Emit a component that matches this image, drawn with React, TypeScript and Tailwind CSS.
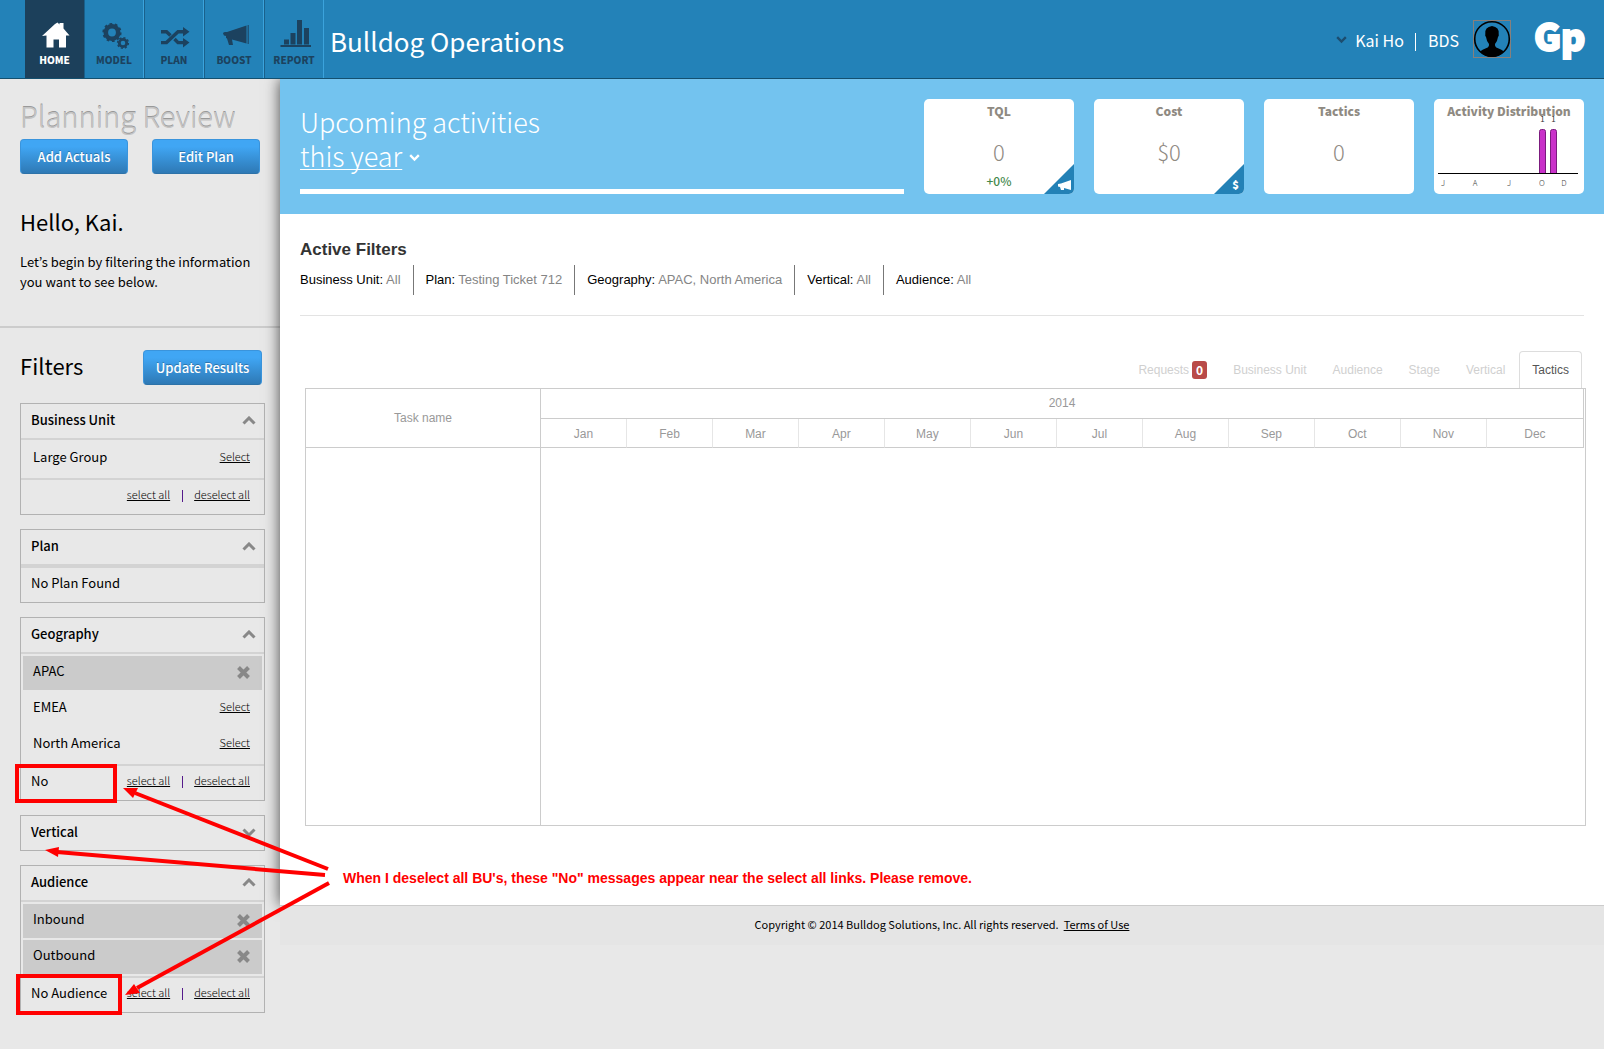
import type { ReactNode } from "react";

const navItems: { label: string; active?: boolean; icon: ReactNode }[] = [
  {
    label: "HOME",
    active: true,
    icon: (
      <path d="M16 36 L29 24 L31.5 22.5 L33.5 24.5 V23 H37.5 V28.5 L43.5 35.5 H40 V47.5 H33 V39.5 H27.5 V47.5 H20.5 V35.5 Z" />
    ),
  },
  {
    label: "MODEL",
    icon: (
      <g fill="none" stroke="currentColor">
        <circle cx="27" cy="32.5" r="6.2" strokeWidth="4.6" />
        <circle cx="27" cy="32.5" r="8.6" strokeWidth="2" strokeDasharray="2.7 2.7" />
        <circle cx="38" cy="43" r="3.7" strokeWidth="2.8" />
        <circle cx="38" cy="43" r="5.4" strokeWidth="1.4" strokeDasharray="2.1 2.1" />
      </g>
    ),
  },
  {
    label: "PLAN",
    icon: (
      <>
        <g fill="none" stroke="currentColor" strokeWidth="3.4">
          <path d="M16 31.8 H21.5 L25.5 35.6" />
          <path d="M16 42.6 H21.5 L33 31.8 H39" />
          <path d="M29.5 39 L33 42.6 H39" />
        </g>
        <path d="M38 27 L44.5 31.8 L38 36.5 Z M38 38 L44.5 42.6 L38 47.4 Z" />
      </>
    ),
  },
  {
    label: "BOOST",
    icon: (
      <>
        <path d="M18 33.5 Q18 32 20 32 L22 32 L41.5 25.5 V43.5 L27 39.5 L28 45 H24 L22 38.5 L21 38 V36 L19 35.5 Z" />
        <path d="M42.5 25 H44 V44 H42.5 Z" opacity="0.7" />
      </>
    ),
  },
  {
    label: "REPORT",
    icon: (
      <path d="M15.5 45 H46 V47 H15.5 Z M19 39.5 H24 V44.5 H19 Z M25.5 33 H30.5 V44.5 H25.5 Z M32 20 H37 V44.5 H32 Z M39 28 H44 V44.5 H39 Z" />
    ),
  },
];

function Chevron({ up = false, className }: { up?: boolean; className: string }) {
  return (
    <svg viewBox="0 0 14 9" className={className} fill="none" stroke="currentColor" strokeWidth="3" aria-hidden="true">
      <path d={up ? "M1.5 7.5 L7 2 L12.5 7.5" : "M1.5 1.5 L7 7 L12.5 1.5"} />
    </svg>
  );
}

function BlueButton({ children, className }: { children: ReactNode; className: string }) {
  return (
    <button
      type="button"
      className={`h-[35px] rounded border border-[#3a94dc] border-b-[#2d72a8] bg-linear-to-b from-[#40a6f4] from-20% to-[#2e79b5] text-[13px] leading-[33px] font-medium text-white [text-shadow:0_-1px_0_rgba(0,0,0,0.25)] ${className}`}
    >
      {children}
    </button>
  );
}

type Item = { name: string; selected?: boolean };

function FilterPanel({
  title,
  items,
  emptyText,
  footerText,
  collapsed = false,
}: {
  title: string;
  items?: Item[];
  emptyText?: string;
  footerText?: string;
  collapsed?: boolean;
}) {
  return (
    <section className="border border-[#b2b2b2] text-[13px]">
      <button type="button" className="flex h-[34px] w-full items-center justify-between pr-2 pb-[2px] pl-[10px] font-medium">
        <span className="leading-8">{title}</span>
        <Chevron up={!collapsed} className="w-[14px] text-[#888]" />
      </button>
      {emptyText && <p className="h-[38px] border-t-4 border-[#d3d3d3] px-[10px] leading-[30px]">{emptyText}</p>}
      {items && (
        <>
          <ul className="flex flex-col gap-[2px] border-y-2 border-[#d3d3d3] p-[2px]">
            {items.map((item) => (
              <li
                key={item.name}
                className={`flex h-[34px] items-start justify-between pr-3 pl-[10px] leading-[30px] ${item.selected ? "bg-[#cbcbcb]" : ""}`}
              >
                <span>{item.name}</span>
                {item.selected ? (
                  <button type="button" aria-label={`Remove ${item.name}`} className="flex h-8 items-center text-[#888]">
                    <svg viewBox="0 0 13 13" className="w-[13px]" stroke="currentColor" strokeWidth="4" aria-hidden="true">
                      <path d="M1.5 1.5 L11.5 11.5 M11.5 1.5 L1.5 11.5" />
                    </svg>
                  </button>
                ) : (
                  <a href="#" className="text-[11px] leading-7 font-light underline">
                    Select
                  </a>
                )}
              </li>
            ))}
          </ul>
          <div className="flex h-[34px] items-start pr-[14px] pl-[10px] leading-[30px]">
            <span className="flex-1">{footerText}</span>
            <a href="#" className="text-[11px] leading-7 font-light underline">
              select all
            </a>
            <span className="mt-[10px] mr-[11px] ml-3 h-3 w-px bg-[#551a8b]" />
            <a href="#" className="text-[11px] leading-7 font-light underline">
              deselect all
            </a>
          </div>
        </>
      )}
    </section>
  );
}

function StatCard({ title, value, change, corner }: { title: string; value: string; change?: string; corner?: ReactNode }) {
  return (
    <section className="relative h-[95px] w-[150px] overflow-hidden rounded-[5px] bg-white text-center text-[#8f8a82]">
      <h3 className="text-[12px] leading-6 font-black">{title}</h3>
      <p className="mt-2 text-[22px] leading-10 font-light">{value}</p>
      {change && <p className="text-[12px] leading-5 font-medium text-[#44884c]">{change}</p>}
      {corner && (
        <svg viewBox="0 0 30 30" className="absolute right-0 bottom-0 w-[30px]" aria-hidden="true">
          <path d="M0 30 L30 0 V30 Z" fill="#2381b6" />
          {corner}
        </svg>
      )}
    </section>
  );
}

const axis = [
  { x: 9, t: "J" },
  { x: 41, t: "A" },
  { x: 75, t: "J" },
  { x: 108, t: "O" },
  { x: 130, t: "D" },
];

function DistributionCard() {
  return (
    <section className="relative h-[95px] w-[150px] rounded-[5px] bg-white text-center text-[#8f8a82]">
      <h3 className="text-[12px] leading-6 font-black">Activity Distribution</h3>
      <svg viewBox="0 0 150 95" className="absolute inset-0" role="img" aria-label="Activities per month">
        <path d="M4 74.5 H144" stroke="#000" />
        {[105.5, 116.5].map((x) => (
          <g key={x}>
            <path
              d={`M${x} 74 V32.5 Q${x} 30.5 ${x + 2} 30.5 H${x + 4} Q${x + 6} 30.5 ${x + 6} 32.5 V74`}
              fill="#c931c9"
              stroke="#7b1b7e"
            />
            <text x={x + 3} y="23" fontSize="8" fill="#333" textAnchor="middle">
              1
            </text>
          </g>
        ))}
        {axis.map((a) => (
          <text key={a.x} x={a.x} y="87" fontSize="8" fill="#444" fontWeight="300" textAnchor="middle">
            {a.t}
          </text>
        ))}
      </svg>
    </section>
  );
}

const activeFilters = [
  ["Business Unit:", "All"],
  ["Plan:", "Testing Ticket 712"],
  ["Geography:", "APAC, North America"],
  ["Vertical:", "All"],
  ["Audience:", "All"],
];

const tabs = ["Business Unit", "Audience", "Stage", "Vertical"];
const months = ["Jan", "Feb", "Mar", "Apr", "May", "Jun", "Jul", "Aug", "Sep", "Oct", "Nov", "Dec"];

const arrows = [
  { tail: "328 869", neck: "135 793", head: "123,788 138,788 133,798" },
  { tail: "325 875", neck: "57 852", head: "45,850 59,847 58,857" },
  { tail: "329 883", neck: "137 988", head: "125,995 134,984 140,993" },
];

export default function App() {
  return (
    <div className='relative min-h-screen bg-[#e8e8e8] font-["Noto_Sans_CJK_KR",sans-serif] text-black'>
      <header className="relative z-10 flex h-[79px] items-stretch border-b border-[#14506f] bg-[#2382b8] pl-[25px]">
        <nav className="flex">
          {navItems.map((n) => (
            <a
              key={n.label}
              href="#"
              className={`flex flex-col items-center border-r border-l ${
                n.active ? "w-[59px] border-[#1c405b] bg-[#1c405b] text-white" : "w-[60px] border-r-[#3ba3dc] border-l-[#1a608b] text-[#1c425f]"
              }`}
            >
              <svg viewBox="0 0 58 50" className="h-[50px] w-[58px]" fill="currentColor" aria-hidden="true">
                {n.icon}
              </svg>
              <span className="text-[10px] leading-[19px] font-black">{n.label}</span>
            </a>
          ))}
        </nav>
        <h1 className="ml-[6px] text-[26px] leading-[82px] text-white">Bulldog Operations</h1>
        <div className="ml-auto flex items-center pr-5 text-[16px] text-white">
          <button type="button" className="flex items-center gap-2 pt-[2px] leading-6">
            <Chevron className="w-[11px] text-[#1c4d6f]" />
            Kai Ho
          </button>
          <span className="mt-[5px] mr-3 ml-[11px] h-[18px] w-px bg-white" />
          <span className="pt-[2px] leading-6">BDS</span>
          <svg viewBox="0 0 38 38" className="ml-[14px] w-[38px]" aria-hidden="true">
            <rect x="0.5" y="0.5" width="37" height="37" fill="none" stroke="#87807c" />
            <circle cx="19" cy="19" r="17.3" fill="none" stroke="#000" strokeWidth="1.6" />
            <path d="M7 31.5 Q9 29.5 13.5 28 Q16.3 27 16 24 Q13.5 21 13 17 Q11.8 16 12.3 14 Q11.5 7 19 6 Q26.5 7 25.7 14 Q26.2 16 25 17 Q24.5 21 22 24 Q21.7 27 24.5 28 Q29 29.5 31 31.5 Q26 37 19 37 Q12 37 7 31.5 Z" />
          </svg>
          <span className="ml-[23px] w-[50px] pb-2 text-[37px] leading-10 font-black [-webkit-text-stroke:2px_white]">Gp</span>
        </div>
      </header>

      <div className="flex items-start">
        <aside className="w-[280px] shrink-0 pb-9">
          <div className="border-b-2 border-[#ccc] px-5 pt-4 pb-[34px]">
            <h2 className="text-[29px] leading-10 font-light text-[#c4c4c4] [text-shadow:0_-1px_0_#999]">Planning Review</h2>
            <div className="mt-1 flex gap-6">
              <BlueButton className="w-[108px]">Add Actuals</BlueButton>
              <BlueButton className="w-[108px]">Edit Plan</BlueButton>
            </div>
            <h2 className="mt-[31px] text-[22px] leading-8">Hello, Kai.</h2>
            <p className="mt-[15px] text-[13px] leading-5">Let’s begin by filtering the information you want to see below.</p>
          </div>
          <div className="pt-[22px] pr-[15px] pl-5">
            <div className="flex items-start justify-between pr-[3px]">
              <h2 className="text-[22px] leading-[30px]">Filters</h2>
              <BlueButton className="w-[119px]">Update Results</BlueButton>
            </div>
            <div className="mt-[18px] flex flex-col gap-[14px]">
              <FilterPanel title="Business Unit" items={[{ name: "Large Group" }]} />
              <FilterPanel title="Plan" emptyText="No Plan Found" />
              <FilterPanel
                title="Geography"
                items={[{ name: "APAC", selected: true }, { name: "EMEA" }, { name: "North America" }]}
                footerText="No"
              />
              <FilterPanel title="Vertical" collapsed />
              <FilterPanel
                title="Audience"
                items={[
                  { name: "Inbound", selected: true },
                  { name: "Outbound", selected: true },
                ]}
                footerText="No Audience"
              />
            </div>
          </div>
        </aside>

        <div className="min-w-0 flex-1">
          <main className='bg-white pb-[79px] font-["Liberation_Sans",Arial,sans-serif] shadow-[0_0_14px_rgba(0,0,0,0.7)]'>
            <div className='flex gap-5 bg-[#73c3ef] p-5 font-["Noto_Sans_CJK_KR",sans-serif]'>
              <div className="flex-1 border-b-[5px] border-white pt-[6px] text-[27px] leading-[34px] font-light text-white">
                <h2>Upcoming activities</h2>
                <button type="button" className="flex items-center gap-[7px]">
                  <span className="underline decoration-1 underline-offset-2 [text-decoration-skip-ink:none]">this year</span>
                  <Chevron className="mt-1 w-[11px]" />
                </button>
              </div>
              <StatCard
                title="TQL"
                value="0"
                change="+0%"
                corner={<path d="M14 20 L17 19.5 L27 16 V26 L20 24 V26 H17 L16 23 L14 22.5 Z" fill="#fff" />}
              />
              <StatCard
                title="Cost"
                value="$0"
                corner={
                  <text x="21.5" y="25" fontSize="11" fontWeight="900" fill="#fff" textAnchor="middle">
                    $
                  </text>
                }
              />
              <StatCard title="Tactics" value="0" />
              <DistributionCard />
            </div>

            <div className="mx-5 border-b border-[#e3e3e3] pt-[23px] pb-5">
              <h2 className="text-[17px] leading-[26px] font-bold text-[#333]">Active Filters</h2>
              <dl className="mt-[2px] flex text-[13px] leading-[30px]">
                {activeFilters.map(([k, v], i) => (
                  <div key={k} className={`flex gap-[3px] ${i > 0 ? "border-l border-[#777] pl-3" : ""} pr-3`}>
                    <dt>{k}</dt>
                    <dd className="text-[#858585]">{v}</dd>
                  </div>
                ))}
              </dl>
            </div>

            <div role="tablist" className="mt-[35px] mr-[22px] flex justify-end gap-[2px] text-[12px] leading-9 text-[#d0d0d0]">
              <button type="button" role="tab" className="flex items-center gap-[3px] px-3">
                Requests
                <span className='h-[18px] rounded-[3px] bg-[#b94a48] px-1 font-["Noto_Sans_CJK_KR",sans-serif] text-[12px] leading-[17px] font-bold text-white'>
                  0
                </span>
              </button>
              {tabs.map((t) => (
                <button key={t} type="button" role="tab" className="px-3">
                  {t}
                </button>
              ))}
              <button type="button" role="tab" aria-selected="true" className="rounded-t border border-b-0 border-[#ddd] px-3 text-[#555]">
                Tactics
              </button>
            </div>

            <div className="mr-[18px] ml-[25px] border border-[#ccc] pr-px">
              <table className="w-full table-fixed border-separate border-spacing-0 text-center text-[12px] text-[#999]">
                <colgroup>
                  <col className="w-[235px]" />
                  {months.map((m) => (
                    <col key={m} className={m === "Dec" ? "w-[97px]" : ""} />
                  ))}
                </colgroup>
                <thead>
                  <tr className="h-[30px]">
                    <th rowSpan={2} className="border-r border-b border-[#ccc] font-normal">
                      Task name
                    </th>
                    <th colSpan={12} className="border-r border-b border-[#ccc] pb-[2px] font-normal">
                      2014
                    </th>
                  </tr>
                  <tr className="h-[29px]">
                    {months.map((m) => (
                      <th
                        key={m}
                        className={`border-r border-b border-b-[#ccc] pt-[2px] font-normal ${m === "Dec" ? "border-r-[#ccc]" : "border-r-[#e6e6e6]"}`}
                      >
                        {m}
                      </th>
                    ))}
                  </tr>
                </thead>
                <tbody>
                  <tr className="h-[377px]">
                    <td className="border-r border-[#ccc]" />
                    <td colSpan={12} />
                  </tr>
                </tbody>
              </table>
            </div>
          </main>
          <footer className="relative flex h-10 justify-center gap-[5px] border-t border-[#ccc] bg-[#e5e5e5] text-[11px] leading-9">
            <span>Copyright © 2014 Bulldog Solutions, Inc. All rights reserved.</span>
            <a href="#" className="underline">
              Terms of Use
            </a>
          </footer>
        </div>
      </div>

      <div className="pointer-events-none absolute top-0 left-0 z-20 text-[#f00]">
        <svg width="340" height="1030" viewBox="0 0 340 1030" fill="none" stroke="currentColor" strokeWidth="4" aria-hidden="true">
          <rect x="17" y="766" width="98" height="35" />
          <rect x="18" y="976" width="102" height="37" />
          {arrows.map((a) => (
            <g key={a.tail}>
              <path d={`M${a.tail} L${a.neck}`} />
              <polygon points={a.head} fill="currentColor" stroke="none" />
            </g>
          ))}
        </svg>
        <p className='absolute top-[868px] left-[343px] font-["Liberation_Sans",Arial,sans-serif] text-[14px] leading-5 font-bold whitespace-nowrap'>
          When I deselect all BU's, these "No" messages appear near the select all links. Please remove.
        </p>
      </div>
    </div>
  );
}
